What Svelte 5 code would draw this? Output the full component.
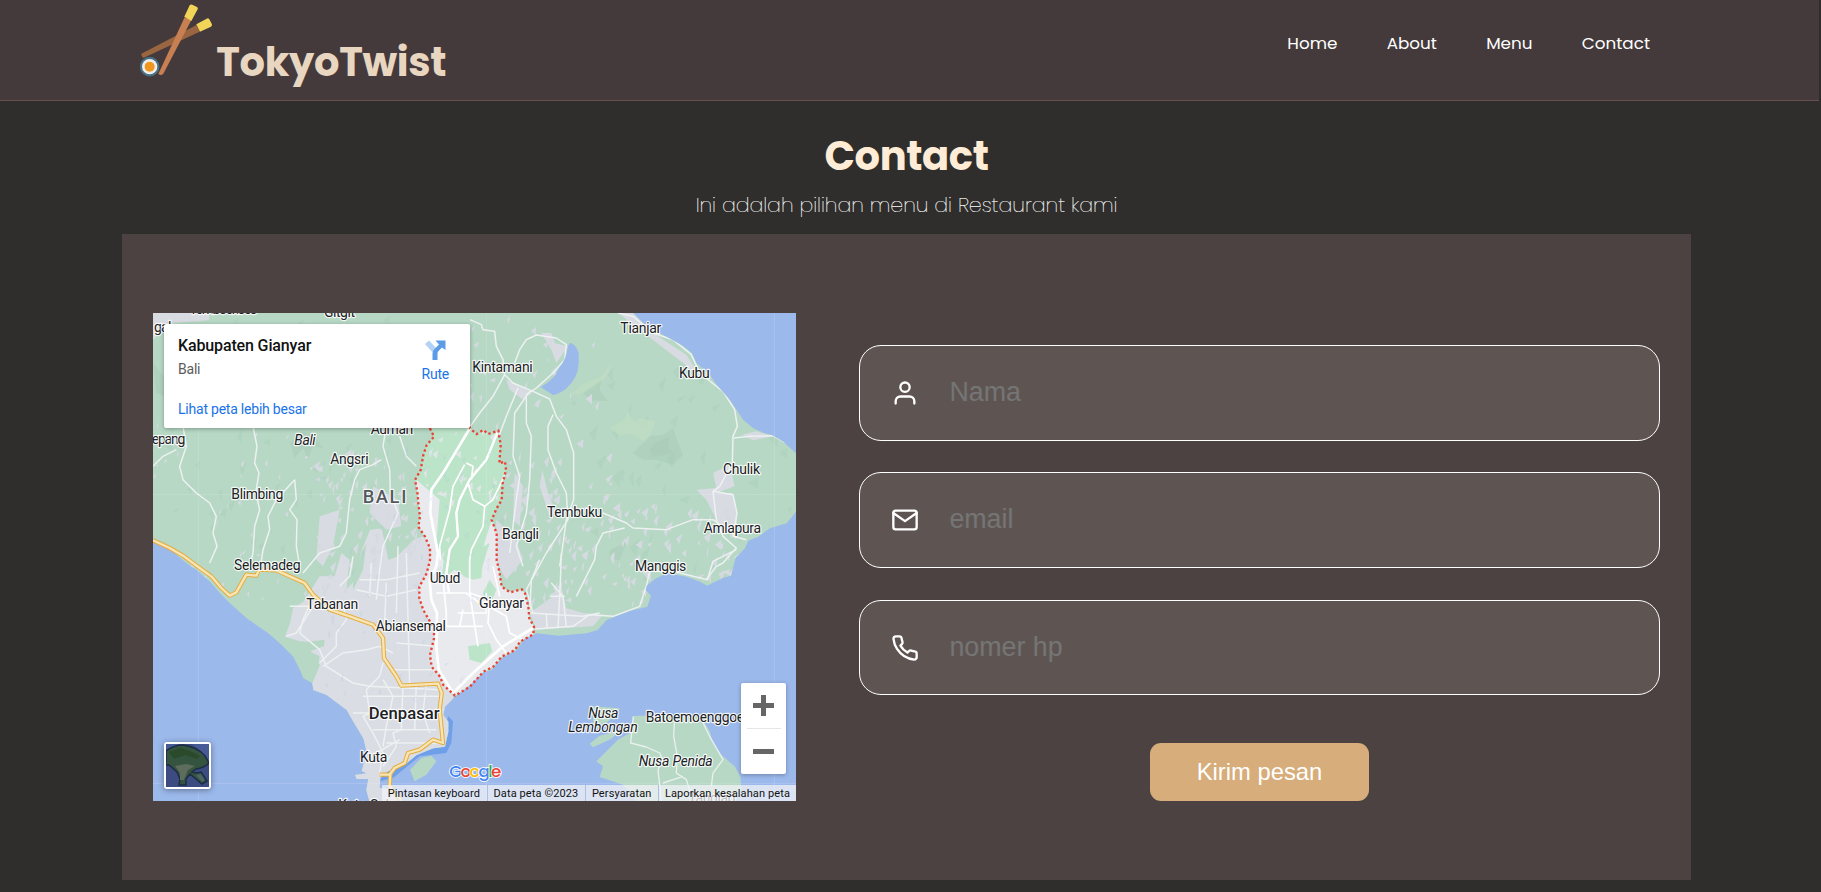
<script>
  const links = ['Home', 'About', 'Menu', 'Contact'];

  const fields = [
    { icon: 'user', label: 'Nama' },
    { icon: 'mail', label: 'email' },
    { icon: 'phone', label: 'nomer hp' }
  ];

  const legal = ['Pintasan keyboard', 'Data peta ©2023', 'Persyaratan', 'Laporkan kesalahan peta'];

  // Map artwork uses three units per CSS pixel.
  const land =
    'M0 0H1441L1471 31 1521 61 1591 99 1616 119 1631 151 1671 186 1691 216 1731 261 1751 291 1771 321 1801 346 1831 359 1856 366 1891 386 1929 421V596L1901 631 1851 646 1816 671 1786 683 1776 706 1748 734 1741 761 1734 788 1711 794 1686 806 1663 818 1641 806 1601 791 1541 781 1506 798 1481 818 1478 831 1494 848 1483 881 1431 894 1361 921 1334 951 1301 961 1216 968 1151 961 1141 966 1116 976 1091 1011 1046 1036 1016 1071 991 1078 951 1116 906 1151 876 1181 871 1206 886 1226 886 1256 876 1301 841 1306 791 1326 761 1351 736 1361 700 1378 682 1395 680 1425 720 1430 745 1464H649L640 1431 646 1398 611 1398 606 1386 641 1381 626 1374 631 1356 641 1316 631 1276 601 1226 581 1191 521 1146 481 1131 478 1111 451 1096 441 1071 421 1031 386 996 346 961 281 916 231 871 206 846 171 806 131 771 101 751 71 726 51 706 0 676Z';

  const region =
    'M831 346L843 371 821 396 811 426 803 471 786 501 793 536 796 571 801 611 796 641 816 671 831 706 831 741 821 781 799 821 799 856 811 891 831 926 843 945 843 976 831 1026 836 1061 861 1091 871 1116 906 1148 951 1121 991 1076 1021 1061 1046 1031 1086 1011 1101 986 1141 964 1143 941 1129 916 1126 881 1116 841 1106 829 1071 838 1046 821 1039 776 1031 741 1031 661 1016 621 1031 586 1046 561 1049 511 1059 471 1056 446 1039 451 1043 396 1036 353 1006 363 991 351 971 363 951 346L935 300H831Z';

  const lowland =
    'M835 660L781 681 731 731 706 741 696 691 686 646 651 651 626 711 606 800 580 830 590 740 565 720 545 790 500 790 451 866 420 885 411 930 396 971 440 985 490 990 470 1020 501 1056 478 1111 440 1140 620 1464H780L900 1300V1150L860 1080V900Z';

  const regionFlat =
    'M790 500L860 560 850 690 872 745 865 800 905 770 935 790 960 720 980 735 1010 640 1025 600 1070 700 1090 830 1160 850 1160 980 900 1170 780 1040 780 800Z';

  const pale = [
    'M0 0H170L168 22 60 30 90 60 40 45 0 80Z',
    'M1165 60L1195 60 1205 90 1245 100 1210 150 1195 110Z',
    'M1395 0H1440L1500 60 1600 125 1650 200 1590 150Z',
    'M1060 200L1130 235 1110 260 1070 230Z',
    'M1680 480L1730 455 1745 520 1690 540 1740 540 1752 610 1750 680 1690 620 1660 560 1630 530 1690 525Z',
    'M1765 365L1810 355 1860 370 1800 382Z',
    'M1200 850L1225 820 1240 885 1290 900 1350 905 1320 940 1150 950 1130 900Z',
    'M1030 620L1090 680 1110 740 1060 800 1025 740Z',
    'M1085 480L1110 520 1100 640 1080 620Z',
    'M1168 470L1185 540 1210 600 1190 610 1160 520Z',
    'M500 610L560 590 540 700 510 760 490 740Z',
    'M660 520L735 560 745 640 700 650 650 600Z'
  ];

  const woods = [
    'M430 990L515 980 513 1000 470 1015 500 1030 495 1060 450 1060Z',
    'M600 780L640 690 630 770 600 830Z',
    'M945 1000L1010 990 1018 1015 985 1050 950 1040Z',
    'M905 600L960 560 1000 590 970 650 930 680Z',
    'M955 720L1010 690 985 770 960 800 930 790Z',
    'M945 720L990 730 985 795 960 800Z',
    'M1010 800L1030 830 1010 880 990 840Z'
  ];

  const relief = [
    'M1370 345L1415 318 1425 292 1435 318 1450 328 1460 315 1507 325 1495 360 1480 390 1435 362 1400 368Z',
    'M1345 190L1375 152 1368 180 1330 225 1300 240 1250 247 1285 215Z'
  ];
  const shade = [
    'M1440 420L1490 370 1530 365 1560 345 1575 390 1590 425 1560 456 1510 440 1470 440Z',
    'M1510 390L1550 370 1545 400 1560 420 1500 432 1490 410Z',
    'M1320 220L1345 200 1340 230 1365 265 1310 262 1290 240Z',
    'M410 390L450 355 480 365 510 405 480 400 465 440 450 405 425 435Z',
    'M0 150L40 200 60 260 10 240Z',
    'M1370 710L1420 690 1400 740 1370 740Z'
  ];

  const roads = [
    'M300 340L312 400 305 450 318 480 308 540 320 590 305 640 300 720 290 760',
    'M90 340L100 400 80 460 90 500 130 540 170 570 190 610 180 660 192 700 170 750',
    'M425 500L430 560 410 590 432 620 430 700 440 760',
    'M425 500L370 560 345 610 350 650 330 710 320 780',
    'M0 460L30 430 70 410',
    'M700 340L690 400 710 470 712 540 735 600 690 700 680 770 670 860',
    'M740 370L760 430 790 460',
    'M685 440L660 455 620 470 605 500 590 560 580 660 560 700 500 720 450 780',
    'M951 20L985 35 990 50 1025 55 1030 100 1050 140 1055 185 1080 210 1140 235 1190 258 1210 310 1240 350 1262 420 1262 560 1240 620 1225 730 1220 760',
    'M1055 185L1020 250 980 300 945 350',
    'M1095 225L1060 310 1030 390 990 470 951 520',
    'M1130 235L1085 300 1080 430 1100 490 1090 560 1080 640 1070 720',
    'M1120 245L1120 330 1135 370 1130 500 1120 600 1090 700 1110 760',
    'M1200 305L1185 340 1185 410 1210 480 1240 540 1245 620 1180 720 1120 830 1140 900',
    'M1085 150L1100 110 1120 80 1150 66 1210 75 1240 95 1235 140 1200 180 1150 225 1120 245',
    'M1395 0L1440 10 1500 60 1560 80 1615 125 1640 180 1710 235 1745 290 1753 340 1740 370 1738 450 1700 520 1680 535 1690 620 1710 670 1750 705 1710 750 1690 760 1660 800',
    'M1742 375L1790 370 1860 368 1900 390 1929 410',
    'M1680 535L1740 545 1752 600 1740 670 1780 680',
    'M1350 600L1420 630 1440 645 1540 650 1620 620 1680 620 1710 640',
    'M1415 645L1350 660 1330 700 1325 740 1270 850',
    'M1750 710L1680 745 1663 800 1620 790 1560 775 1490 775 1480 820 1460 880 1380 910 1310 905 1260 940 1145 948',
    'M1225 720L1222 810 1215 945M1160 740L1135 800 1130 900 1290 910 1340 900M1180 900L1182 945M1195 810L1230 850 1240 940M1190 850H1235',
    'M860 340L830 400 860 440',
    'M475 865L450 920 440 960 500 1010 520 1060 600 1110 650 1120',
    'M410 880L480 880 430 960 400 970',
    'M510 1060L570 1020 640 1010 680 1000 720 1020',
    'M570 870L580 920 550 960 550 1000 500 1050',
    'M600 730L590 790 560 820M610 830L700 850 790 830M620 800L700 800 800 780M655 750L650 850M700 810L695 930M735 700L730 900M760 720L770 1120',
    'M690 1050L680 1090 640 1130 650 1200 630 1210 660 1260 690 1320 680 1380',
    'M750 1110L745 1250 720 1260 730 1300 690 1360M690 1100L720 1150 700 1240 690 1300M790 1110L785 1250M820 1110L810 1200 830 1260',
    'M630 1150H870M600 1200H860M660 1250H850M650 1120L860 1130M700 1290H860M670 1320L740 1280M715 1070H850M730 990L850 1000'
  ];

  const brightRoads = [
    'M951 345L900 430 870 480 835 530 832 600 845 670 855 720 850 760 830 800 835 860 852 900 850 1000 857 1070 900 1140 960 1080 1050 1000 1140 945',
    'M1035 355L1000 440 950 500 920 560 910 600 915 670 890 710 880 780 888 840',
    'M945 510L960 560 995 580 1020 560 1058 480',
    'M995 580L990 640 955 710 950 740 950 840 1010 860 1090 870',
    'M940 450L960 460 955 500M935 455L900 520 890 590 860 700 862 740',
    'M850 840L880 840 940 840 980 870M870 800L880 900 880 940 990 940M950 840L975 1000',
    'M915 900H1000V840M990 870L1060 910 1070 960 1110 980M1020 760L1040 850M930 890L920 940M1010 860L1005 930 1030 980 1060 1020'
  ];

  const highways =
    'M0 682L50 705 90 728 140 765 175 790 205 825 230 848 250 838 280 785 310 788 318 770 370 772 410 790 455 810 480 845 530 890 590 910 660 935 690 975 693 1035 730 1090 745 1118 855 1112 866 1140 860 1190 870 1290 840 1280 800 1310 765 1320 755 1350 725 1365 710 1385 680 1385M712 1380L710 1420 745 1464';

  const labels = [
    ['Temboekoes', 109, 3, 204], ['Gitgit', 513, 11, 93], ['gal', 3, 57, 52],
    ['Tianjar', 1402, 60, 123], ['Kubu', 1578, 196, 92], ['Kintamani', 958, 177, 181],
    ['Chulik', 1710, 483, 111], ['Tembuku', 1182, 613, 166], ['Bangli', 1047, 678, 111],
    ['Amlapura', 1652, 661, 172], ['Blimbing', 235, 557, 156], ['Angsri', 532, 452, 115],
    ['Auman', 653, 363, 128], ['epang', -4, 394, 101], ['Selemadeg', 243, 771, 200],
    ['Tabanan', 460, 887, 156], ['Abiansemal', 668, 954, 211], ['Ubud', 830, 811, 92],
    ['Kuta', 621, 1348, 82], ['Manggis', 1446, 774, 154], ['Gianyar', 978, 885, 135],
    ['Batoemoenggoek', 1478, 1227, 316], ['Tanglad', 1606, 1469, 142], ['Kuta Sel', 556, 1490, 152]
  ];
  const italics = [
    ['Bali', 424, 395, 64], ['Nusa', 1306, 1216, 90], ['Lembongan', 1246, 1258, 208], ['Nusa Penida', 1457, 1360, 222]
  ];

  // Small clearings and valleys scattered over the hills, from a fixed seed.
  function scatter(count, seed, x0, y0, w, h, size) {
    let s = seed;
    const rnd = () => ((s = (s * 16807) % 2147483647) / 2147483647);
    let d = '';
    for (let i = 0; i < count; i++) {
      const x = x0 + rnd() * w;
      const y = y0 + rnd() * h;
      const a = size * (0.4 + rnd());
      const b = size * (0.8 + rnd() * 1.6);
      const lean = a * rnd() * 0.7;
      d += `M${x.toFixed(0)} ${y.toFixed(0)}l${a.toFixed(0)} ${(-b * 0.5).toFixed(0)}l${(-lean).toFixed(0)} ${b.toFixed(0)}Z`;
    }
    return d;
  }
  const clearings =
    scatter(36, 71, 0, 300, 480, 560, 10) +
    scatter(90, 913, 480, 420, 330, 420, 15) +
    scatter(85, 377, 1040, 380, 330, 520, 17) +
    scatter(75, 5521, 1350, 580, 400, 300, 16) +
    scatter(26, 818, 950, 20, 380, 330, 14);
  const ridges = scatter(60, 4242, 0, 10, 700, 700, 20) + scatter(50, 99, 1250, 150, 660, 650, 24);
  const regionClearings = scatter(34, 1234, 810, 360, 230, 380, 14);
  const streams = scatter(60, 6007, 480, 380, 560, 780, 9);
</script>

<div class="page">
  <header>
    <a class="brand" href="#home">
      <svg viewBox="0 0 220 225" aria-hidden="true">
        <path d="M4 155Q3 162 10 168L179 89 170 69Z" fill="#9a6541" />
        <path d="M169 67L200 50Q205 47 208 52L216 67Q217 71 213 74L180 89Z" fill="#f2d558" />
        <path d="M134 46L154 55 70 215Q63 223 55 216Z" fill="#c87f51" />
        <path d="M133 44L149 10Q152 6 157 8L171 15Q175 18 173 22L154 57Z" fill="#f2d558" />
        <circle cx="29" cy="194" r="29.500" fill="#487084" />
        <circle cx="29" cy="194" r="23" fill="#f3f1ee" />
        <circle cx="29" cy="194" r="15" fill="#ef961e" />
        <circle cx="29" cy="194" r="18" fill="none" stroke="#cfd8dc" stroke-width="1.500" stroke-dasharray="4 4" />
      </svg>
      <span>TokyoTwist</span>
    </a>
    <nav>
      {#each links as link}
        <a href="#{link.toLowerCase()}">{link}</a>
      {/each}
    </nav>
  </header>

  <main>
    <h1>Contact</h1>
    <p class="lead">Ini adalah pilihan menu di Restaurant kami</p>

    <section class="panel">
      <div class="map">
        <svg class="canvas" viewBox="0 0 1929 1464" aria-hidden="true">
          <defs>
            <clipPath id="land"><path d={land} /></clipPath>
            <clipPath id="region"><path d={region} /></clipPath>
          </defs>
          <rect width="1929" height="1464" fill="#9cb9ec" />
          <path d="M886 1210L900 1225 895 1290 880 1320 800 1330 720 1395 680 1405V1360L740 1340 860 1290Z" fill="#6f9fe8" />
          <path d={land} fill="#b6d8c4" />
          <g clip-path="url(#land)">
            <path d={ridges} fill="#a9cfb9" opacity=".35" />
            {#each relief as d}<path {d} fill="#c2ddc3" opacity=".7" />{/each}
            {#each shade as d}<path {d} fill="#a5c8b3" opacity=".4" />{/each}
            <path d={lowland} fill="#dadde3" />
            {#each pale as d}<path {d} fill="#d8dbe1" />{/each}
            <path d={clearings} fill="#d5dae0" />
            {#each woods.slice(0, 2) as d}<path {d} fill="#b6d8c4" />{/each}
            <g fill="none" stroke="#edf1f2" stroke-width="4.500" stroke-linejoin="round">
              {#each roads as d}<path {d} />{/each}
            </g>
            <g clip-path="url(#region)">
              <path d={region} fill="#bce4c9" />
              <path d={regionClearings} fill="#dfe6e6" />
              <path d={regionFlat} fill="#e8eaee" />
              {#each woods.slice(2) as d}<path {d} fill="#bce4c9" />{/each}
              <g fill="none" stroke="#fff" stroke-width="5" stroke-linejoin="round">
                {#each brightRoads as d}<path {d} />{/each}
              </g>
              <path d={brightRoads[0]} fill="none" stroke="#fff" stroke-width="8" stroke-linejoin="round" />
              <path d={brightRoads[1]} fill="none" stroke="#fff" stroke-width="7" stroke-linejoin="round" />
            </g>
            <path d={streams} fill="none" stroke="#9cb9ec" stroke-width="1" opacity=".5" />
          </g>
          <path d="M1250 90Q1268 92 1277 120Q1282 180 1255 210Q1232 240 1200 246L1163 222Q1205 200 1218 165Q1240 140 1245 100Z" fill="#9cb9ec" />
          <path d="M1441 1210L1460 1208 1620 1208 1650 1220 1670 1255 1680 1290 1705 1325 1745 1360 1762 1390 1765 1430 1745 1464H1450L1410 1415 1340 1392 1350 1360 1330 1345 1355 1320 1395 1280 1430 1260Z" fill="#b6d8c4" />
          <path d="M1310 1292L1340 1268 1405 1252 1370 1280 1320 1303ZM1320 1180L1400 1186 1395 1200 1360 1230 1320 1235ZM771 1370L805 1335 835 1328 850 1345 820 1385 785 1405Z" fill="#b6d8c4" />
          <g fill="none" stroke="#e9f0ee" stroke-width="4" stroke-linejoin="round">
            <path d="M1441 1210L1433 1290 1480 1302 1520 1320 1530 1340 1515 1370 1525 1464M1565 1210L1562 1270 1573 1330 1570 1380 1600 1400 1620 1464M1640 1208L1670 1270 1710 1340 1680 1380 1675 1420M1530 1410L1590 1390" />
          </g>
          <path d="M136 0V1464M1000 0V1464M1864 0V1464M0 1411H1929M0 545H1929" stroke="#fff" stroke-opacity=".15" stroke-width="3" />
          <path d={highways} fill="none" stroke="#e6ad3c" stroke-width="13" stroke-linejoin="round" />
          <path d={highways} fill="none" stroke="#f8e5b7" stroke-width="7" stroke-linejoin="round" />
          <path d={region} fill="none" stroke="#ea4335" stroke-width="7" stroke-dasharray="7 8" />
          <g class="names">
            {#each labels as [name, x, y, w]}
              <text {x} {y} textLength={w}>{name}</text>
            {/each}
            {#each italics as [name, x, y, w]}
              <text class="it" {x} {y} textLength={w}>{name}</text>
            {/each}
            <text class="island" x="629" y="570" textLength="131">BALI</text>
            <text class="city" x="647" y="1219" textLength="213">Denpasar</text>
          </g>
          <text class="google" x="889" y="1392" textLength="156"><tspan fill="#4285f4">G</tspan><tspan fill="#ea4335">o</tspan><tspan fill="#fbbc05">o</tspan><tspan fill="#4285f4">g</tspan><tspan fill="#34a853">l</tspan><tspan fill="#ea4335">e</tspan></text>
        </svg>

        <div class="place">
          <div class="about">
            <strong>Kabupaten Gianyar</strong>
            <span>Bali</span>
            <a href="#peta">Lihat peta lebih besar</a>
          </div>
          <a class="route" href="#rute">
            <svg viewBox="0 0 21 20" aria-hidden="true">
              <path d="M0 4L4 0.500 12 9 9 14Z" fill="#b3d2f5" />
              <path d="M7.500 20V13.500Q7.500 11 9.500 9L14 4.500 10.500 0.500H20.500V10L17 7.500 13.500 11Q12.500 12 12.500 13.500V20Z" fill="#5c9ce6" />
            </svg>
            Rute
          </a>
        </div>

        <div class="satellite">
          <svg viewBox="0 0 43 43" aria-hidden="true">
            <rect width="43" height="43" fill="#3d4c80" />
            <path d="M0 0H14L4 6 0 8ZM26 0H43V20L36 9Z" fill="#465a96" />
            <path d="M0 7Q8 1 17 1Q32 3 39 12L43 19Q38 24 30 25L26 28 31 29 35 28 41 37 36 40 30 35 24 30 20 35V41H13L14 35 11 28 3 21 0 21Z" fill="#34543f" stroke="#1d2b45" stroke-width="1.500" />
            <path d="M3 8L14 4 24 7 34 12 31 15 19 11 8 15Z" fill="#2b4a2b" />
            <path d="M9 22L20 20 29 22 22 26 18 36 14 36 14 29Z" fill="#5d6c5c" />
            <path d="M30 31L35 30 39 36 36 38Z" fill="#4d6665" />
          </svg>
        </div>

        <div class="zoom">
          <button aria-label="+"><i></i><i class="upright"></i></button>
          <hr />
          <button aria-label="−"><i></i></button>
        </div>

        <div class="legal">
          {#each legal as item}<span>{item}</span>{/each}
        </div>
      </div>

      <form>
        {#each fields as field}
          <label>
            <svg viewBox="0 0 24 24" aria-hidden="true">
              {#if field.icon === 'user'}
                <path d="M20 21v-2a4 4 0 0 0-4-4H8a4 4 0 0 0-4 4v2" /><circle cx="12" cy="7" r="4" />
              {:else if field.icon === 'mail'}
                <path d="M4 4h16c1.100 0 2 .9 2 2v12c0 1.100-.9 2-2 2H4c-1.100 0-2-.9-2-2V6c0-1.100.9-2 2-2z" /><polyline points="22,6 12,13 2,6" />
              {:else}
                <path d="M22 16.920v3a2 2 0 0 1-2.180 2 19.790 19.790 0 0 1-8.630-3.070 19.500 19.500 0 0 1-6-6 19.790 19.790 0 0 1-3.070-8.670A2 2 0 0 1 4.110 2h3a2 2 0 0 1 2 1.720 12.840 12.840 0 0 0 .7 2.810 2 2 0 0 1-.45 2.110L8.090 9.910a16 16 0 0 0 6 6l1.270-1.270a2 2 0 0 1 2.110-.45 12.840 12.840 0 0 0 2.810.7A2 2 0 0 1 22 16.920z" />
              {/if}
            </svg>
            <input type="text" placeholder={field.label} />
          </label>
        {/each}
        <button class="send" type="button">Kirim pesan</button>
      </form>
    </section>
  </main>
</div>

<style>
  :global(body) {
    background: #2f2e2c;
    overflow: hidden;
  }
  .page {
    width: 1819px;
    height: 892px;
    overflow: hidden;
    background: #2f2e2c;
    font-family: Poppins, Inter, sans-serif;
  }
  a {
    color: inherit;
    text-decoration: none;
  }
  header {
    box-sizing: border-box;
    height: 101px;
    padding: 0 169px 0 140px;
    display: flex;
    justify-content: space-between;
    background: #443a3b;
    border-bottom: 1px solid #66514f;
  }
  .brand {
    display: flex;
    gap: 3px;
    color: #e8d6c0;
    font-size: 40px;
    font-weight: 700;
    line-height: 48px;
    letter-spacing: -0.350px;
  }
  .brand svg {
    width: 73.300px;
    height: 75px;
    margin-top: 1.500px;
  }
  .brand span {
    padding-top: 38px;
  }
  nav {
    display: flex;
    gap: 49.300px;
    padding-top: 31px;
    color: #fff;
    font-size: 16.800px;
    line-height: 25px;
  }
  main {
    padding-left: 122px;
    width: 1569px;
  }
  h1 {
    margin: 30px 0 0;
    text-align: center;
    color: #ffecd6;
    font-size: 40px;
    line-height: 50px;
    font-weight: 700;
    letter-spacing: -0.400px;
  }
  .lead {
    margin: 10px 0 0;
    text-align: center;
    color: #fff;
    font-size: 20.500px;
    line-height: 28px;
    font-weight: 100;
    -webkit-text-stroke: 0.200px #fff;
    padding-bottom: 15px;
  }
  .panel {
    box-sizing: border-box;
    height: 646px;
    padding: 79px 31px;
    display: grid;
    grid-template-columns: 643px 801px;
    gap: 63px;
    background: #4c4241;
  }
  .map {
    position: relative;
    height: 488px;
    overflow: hidden;
    font-family: Roboto, sans-serif;
  }
  .canvas {
    display: block;
    width: 643px;
    height: 488px;
  }
  .names text {
    font-size: 42px;
    fill: #202124;
    stroke: #fff;
    stroke-width: 7px;
    stroke-opacity: 0.85;
    stroke-linejoin: round;
    paint-order: stroke;
  }
  .names .it {
    font-style: italic;
  }
  .names .island {
    font-size: 55px;
    font-weight: 500;
    fill: #55595e;
  }
  .names .city {
    font-size: 50px;
    font-weight: 500;
  }
  .google {
    font-family: Poppins, Inter, sans-serif;
    font-size: 50px;
    font-weight: 500;
    stroke: #fff;
    stroke-width: 5px;
    paint-order: stroke;
  }
  .place {
    position: absolute;
    left: 11px;
    top: 11px;
    box-sizing: border-box;
    width: 306px;
    height: 104px;
    padding: 12px 21px 0 14px;
    display: flex;
    justify-content: space-between;
    background: #fff;
    border-radius: 2px;
    box-shadow: 0 1px 4px rgba(0, 0, 0, 0.3);
    font-size: 14px;
    letter-spacing: -0.220px;
  }
  .about {
    display: flex;
    flex-direction: column;
  }
  .about strong {
    font-size: 16px;
    line-height: 20px;
    font-weight: 500;
    letter-spacing: -0.140px;
    color: #111;
  }
  .about span {
    margin-top: 4px;
    line-height: 18px;
    color: #5b5b5b;
  }
  .about a {
    margin-top: 22px;
    line-height: 18px;
    color: #1a73e8;
  }
  .route {
    display: flex;
    flex-direction: column;
    align-items: center;
    color: #1a73e8;
    line-height: 18px;
  }
  .route svg {
    width: 21px;
    height: 20px;
    margin: 4px 0 5px;
  }
  .satellite {
    position: absolute;
    left: 11px;
    top: 429px;
    width: 43px;
    height: 43px;
    border: 2px solid #fff;
    border-radius: 3px;
    background: #fff;
    box-shadow: 0 1px 6px rgba(0, 0, 0, 0.4);
  }
  .satellite svg {
    display: block;
  }
  .zoom {
    position: absolute;
    left: 588px;
    top: 370px;
    width: 45px;
    height: 91px;
    background: #fff;
    border-radius: 2px;
    box-shadow: 0 1px 4px rgba(0, 0, 0, 0.3);
    display: flex;
    flex-direction: column;
    align-items: center;
  }
  .zoom button {
    flex: 1;
    width: 45px;
    padding: 0;
    border: 0;
    background: none;
    display: grid;
    place-items: center;
  }
  .zoom i {
    grid-area: 1 / 1;
    width: 21px;
    height: 5px;
    background: #666;
  }
  .zoom .upright {
    width: 5px;
    height: 21px;
  }
  .zoom hr {
    width: 34px;
    height: 1px;
    margin: 0;
    border: 0;
    background: #e6e6e6;
  }
  .legal {
    position: absolute;
    right: 0;
    bottom: 0;
    display: flex;
    height: 16px;
    background: rgba(241, 243, 247, 0.75);
    font-size: 11px;
    letter-spacing: 0.110px;
    line-height: 17px;
    color: #111;
    white-space: nowrap;
  }
  .legal span {
    padding: 0 7px 0 5.500px;
  }
  .legal span:last-child {
    padding-right: 6px;
  }
  .legal span + span {
    border-left: 1px solid #a8c0e4;
  }
  form {
    display: flex;
    flex-direction: column;
    padding-top: 32px;
    gap: 31.700px;
  }
  label {
    box-sizing: border-box;
    height: 95.700px;
    display: flex;
    align-items: center;
    padding-left: 31px;
    border: 1px solid #fff;
    border-radius: 22px;
    background: #5e5553;
  }
  label svg {
    width: 28px;
    height: 28px;
    fill: none;
    stroke: #fff;
    stroke-width: 2;
    stroke-linecap: round;
    stroke-linejoin: round;
  }
  input {
    flex: 1;
    margin-left: 30.400px;
    margin-right: 20px;
    padding: 0 0 1px;
    border: 0;
    outline: 0;
    background: none;
    font: 26.800px 'Liberation Sans', Arial, sans-serif;
    color: #fff;
  }
  input::placeholder {
    color: #757575;
    opacity: 1;
  }
  .send {
    align-self: center;
    width: 219px;
    height: 58px;
    margin-top: 16.200px;
    padding: 0;
    border: 0;
    border-radius: 11px;
    background: #d6ad7b;
    color: #fff;
    font: 23.800px 'Liberation Sans', Arial, sans-serif;
  }
</style>
